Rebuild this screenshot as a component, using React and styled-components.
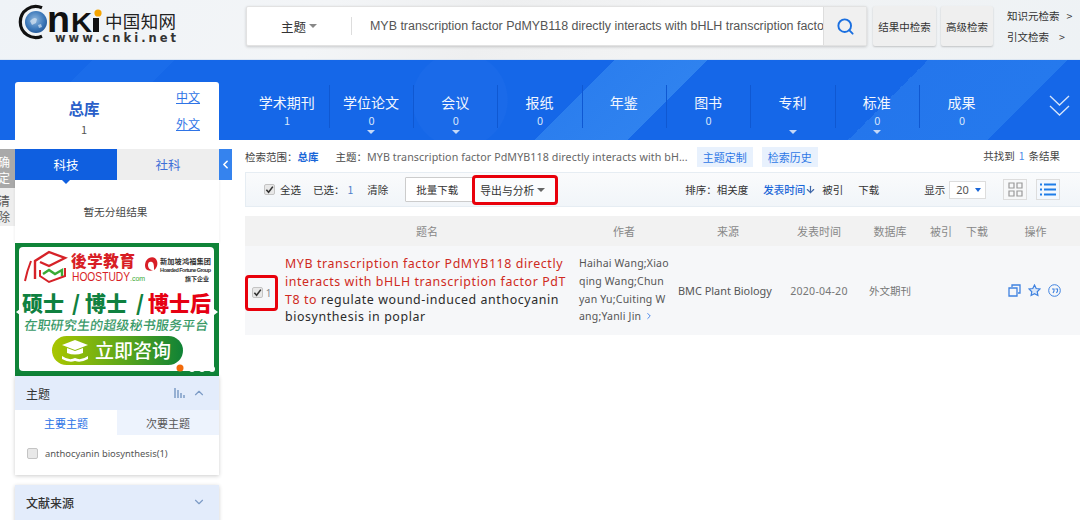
import React from 'react';
import styled, { createGlobalStyle } from 'styled-components';
import { Search, ChevronUp, ChevronDown, ChevronLeft, ChevronRight, ArrowDown } from 'lucide-react';

const CJK = `"Noto Sans CJK SC", "Noto Sans", sans-serif`;
const LATIN = `"Noto Sans", "Noto Sans CJK SC", sans-serif`;

const Global = createGlobalStyle`
  html, body { margin: 0; padding: 0; background: #fff; }
  body { width: 1080px; height: 520px; overflow: hidden; font-family: ${CJK}; color: #333; }
  * { box-sizing: border-box; }
`;

const Page = styled.div`width: 1080px; height: 520px; overflow: hidden; display: flex; flex-direction: column;`;

const Header = styled.header`
  height: 60px; flex: none; display: flex; align-items: flex-start;
  padding: 6px 0 0 18px;
  background: linear-gradient(120deg, #eff3f7 0%, #f3f5f7 30%, #eeeff0 45%, #f2f3f4 60%, #eef2f5 100%);
  border-bottom: 1px solid #dce6f2;
`;
const LogoSvg = styled.svg`width: 170px; height: 44px; margin-top: -6px; flex: none; overflow: visible;`;
const SearchBox = styled.div`
  width: 621px; height: 40px; margin-left: 58px; flex: none; display: flex; align-items: center;
  background: #fff; border: 1px solid #e2e2e2; border-radius: 2px; box-shadow: 0 1px 3px rgba(0,0,0,.18);
`;
const ScopeSelect = styled.div`
  width: 105px; height: 18px; display: flex; align-items: center; gap: 3px;
  padding-left: 34px; font-size: 12.5px; color: #333; border-right: 1px solid #ddd; flex: none;
`;
const Caret = styled.i`
  display: inline-block; width: 0; height: 0; flex: none;
  border-left: ${p => p.$w || 4}px solid transparent; border-right: ${p => p.$w || 4}px solid transparent;
  border-top: ${p => p.$h || 4}px solid ${p => p.$c || '#888'};
`;
const Query = styled.div`
  flex: 1; min-width: 0; padding-left: 18px; overflow: hidden; white-space: nowrap;
  font: 12.45px "Liberation Sans", sans-serif; color: #555;
`;
const SearchBtn = styled.div`
  width: 43px; height: 38px; flex: none; display: flex; align-items: center; justify-content: center;
  background: #f0f0f0; border-left: 1px solid #ddd; color: #1a6fe0;
`;
const GreyBtn = styled.div`
  height: 40px; width: ${p => p.$w}px; margin-left: ${p => p.$ml}px; flex: none; display: flex; align-items: center; justify-content: center;
  background: #efefef; border-radius: 2px; box-shadow: 0 1px 2px rgba(0,0,0,.2); font-size: 10.5px; color: #333; white-space: nowrap;
`;
const SideLinks = styled.div`
  margin-left: 14px; padding-top: 2px; display: flex; flex-direction: column; gap: 5px; font-size: 10.5px; color: #333; line-height: 16px;
`;
const SideLink = styled.div`display: flex; gap: ${p => p.$gap}px;`;

const Band = styled.section`
  height: 80px; flex: none; display: flex; align-items: flex-end; padding-left: 15px; position: relative;
  background:
    radial-gradient(circle at 460px 40px, #1a6ae9 0, #1a6ae9 47px, transparent 48px),
    linear-gradient(135deg, #1567e8 0, #1567e8 8%, #1a6cea 8%, #1a6cea 15%, #1567e8 15%, #1567e8 53%, #2b7eee 53%, #2f82ef 61%, #1567e8 61%, #1567e8 80%, #2476ec 80%, #2579ed 92%, #1567e8 92%);
`;
const LibCard = styled.div`
  width: 204px; height: 58px; flex: none; background: #fff; border-radius: 3px 3px 0 0;
  display: flex;
`;
const LibMain = styled.div`
  width: 138px; flex: none; display: flex; flex-direction: column; align-items: center; padding-top: 16px;
`;
const LibName = styled.div`font-size: 15.5px; line-height: 20px; font-weight: 700; color: #2a5fc9;`;
const LibCount = styled.div`font-size: 11px; color: #555; line-height: 23px;`;
const LibLangs = styled.div`flex: 1; display: flex; flex-direction: column; gap: 9px; padding-top: 6px; padding-left: 23px;`;
const LangLink = styled.a`font-size: 12px; line-height: 18px; color: #2f74e6; text-decoration: underline;`;
const Nav = styled.nav`margin-left: 26.5px; display: flex; height: 43px; align-self: flex-start; margin-top: 25px;`;
const NavItem = styled.div`
  width: 84.3px; height: 43px; padding-top: 5px; position: relative; display: flex; flex-direction: column; align-items: center; color: #fff;
  border-right: ${p => p.$last ? 'none' : '1px solid #0f58d2'};
`;
const NavName = styled.div`font-size: 14px; line-height: 24px; color: #f3f7fe; margin-left: -1px;`;
const NavCount = styled.div`font-size: 11px; line-height: 13px; color: #d6e5fb;`;
const NavCaret = styled(Caret)`position: absolute; bottom: -6px; left: 50%; margin-left: -4px;`;
const Expand = styled.svg`position: absolute; right: 10px; top: 35px; width: 21px; height: 22px;`;

const Body = styled.main`flex: 1; min-height: 0; display: flex; align-items: flex-start; padding-top: 9px;`;
const Stub = styled.div`width: 15px; flex: none; display: flex; flex-direction: column;`;
const StubBtn = styled.div`
  height: ${p => p.$h}px; overflow: hidden; background: ${p => p.$bg}; color: ${p => p.$c};
  font-size: 12px; line-height: 16px; padding-top: 5px;
`;
const StubInner = styled.div`margin-left: -2px; width: 12px;`;
const Aside = styled.aside`width: 204px; flex: none; display: flex; flex-direction: column;`;
const TopTabs = styled.div`display: flex; height: 31px;`;
const TopTab = styled.div`
  width: 102px; display: flex; align-items: center; justify-content: center; position: relative; font-size: 12.5px;
  background: ${p => p.$on ? '#0f5fe0' : '#eee'}; color: ${p => p.$on ? '#fff' : '#3f6fd8'};
  ${p => p.$on && `&::after { content: ''; position: absolute; left: 46px; bottom: -4px; border: 5px solid transparent; border-bottom: 0; border-top-color: #0f5fe0; }`}
`;
const Empty = styled.div`
  height: 63px; display: flex; align-items: center; justify-content: center; padding-right: 3px; font-size: 10.7px; color: #444;
  background: #fff; box-shadow: 1px 0 2px rgba(0,0,0,.05), -1px 0 2px rgba(0,0,0,.05);
`;
const AdSvg = styled.svg`display: block; width: 204px; height: 133px; flex: none;`;
const FacetCard = styled.div`
  background: #fff; box-shadow: 0 1px 4px rgba(0,0,0,.2); display: flex; flex-direction: column; margin-bottom: ${p => p.$mb || 0}px;
`;
const FacetHead = styled.div`
  height: ${p => p.$h}px; padding: 0 13px 0 11px; padding-bottom: ${p => p.$pb || 0}px; display: flex; align-items: center; background: #e3ecfb; font-size: 12px; color: #333; font-weight: ${p => p.$bold ? 500 : 400};
`;
const FacetTitle = styled.div`flex: 1;`;
const Bars = styled.svg`width: 11px; height: 10px; margin-right: 7px; flex: none;`;
const FacetTabs = styled.div`display: flex; height: 25px;`;
const FacetTab = styled.div`
  width: 102px; display: flex; align-items: center; justify-content: center; font-size: 11px;
  background: ${p => p.$on ? '#fff' : '#edf3fd'}; color: ${p => p.$on ? '#2a72e6' : '#555'};
`;
const FacetRow = styled.div`height: 40px; padding: 0 0 3px 12px; display: flex; align-items: center; gap: 7px; font: 9.4px ${LATIN}; color: #555; background: #fff;`;
const Box = styled.span`
  width: ${p => p.$s || 11}px; height: ${p => p.$s || 11}px; flex: none; display: inline-flex; align-items: center; justify-content: center;
  background: #e8e8e8; border: 1px solid #c4c4c4; border-radius: 2px;
`;
const Toggle = styled.div`
  width: 13px; height: 31px; flex: none; background: #3583ee; color: #fff; display: flex; align-items: center; justify-content: center;
`;
const Content = styled.div`flex: 1; min-width: 0; padding-left: 13px; display: flex; flex-direction: column;`;
const Crumbs = styled.div`height: 27px; display: flex; align-items: center; font-size: 10.5px; color: #444; margin-top: -6px;`;
const Blue = styled.span`color: ${p => p.$c || '#1a66d8'}; font-weight: ${p => p.$b ? 700 : 400};`;
const Topic = styled.span`margin-left: 17px; color: #444;`;
const TopicQ = styled.span`font: 10.7px ${LATIN}; letter-spacing: .09px; color: #666; white-space: nowrap;`;
const Chip = styled.span`
  height: 20px; padding: 0 6px; margin-left: ${p => p.$ml}px; background: #e8f1fd; color: #2e78e6; display: inline-flex; align-items: center; font-size: 11px;
`;
const Found = styled.span`margin-left: auto; padding-right: 20px; font-size: 10.5px; color: #444; margin-top: -2px; display: inline-flex; gap: 4px;`;
const Toolbar = styled.div`
  height: 35px; margin-top: 2px; display: flex; align-items: center; padding-left: 18px;
  background: linear-gradient(#fafbfc, #f1f5f9); border: 1px solid #e6edf3; border-right: 0; font-size: 10.5px; color: #333;
`;
const ToolText = styled.span`margin-left: ${p => p.$ml || 0}px; color: ${p => p.$c || '#333'}; font-weight: ${p => p.$b ? 500 : 400}; display: inline-flex; align-items: center; white-space: nowrap;`;
const BatchBtn = styled.div`
  width: 68px; height: 25px; margin-left: 17px; padding-right: 4px; flex: none; background: #fff; border: 1px solid #ccc; display: flex; align-items: center; justify-content: center; font-size: 10.5px; border-radius: 1px;
`;
const ExportBtn = styled.div`
  width: 86px; height: 30px; margin-left: -1px; padding-left: 5px; flex: none; display: flex; align-items: center; gap: 3px; font-size: 10.8px;
  border: 3px solid #e8000b; border-radius: 4px; background: #fbfcfd; position: relative;
`;
const PageSize = styled.div`
  width: 37px; height: 18px; margin-left: 4px; background: #fff; border: 1px solid #ddd; display: flex; align-items: center; justify-content: space-between; padding: 0 4px 0 6px; font: 11px ${LATIN}; color: #555;
`;
const ViewBtn = styled.div`
  width: 24px; height: 21px; margin-left: ${p => p.$ml}px; flex: none; border: 1px solid #ddd; display: flex; align-items: center; justify-content: center; background: ${p => p.$on ? '#f4f8fd' : '#f7f8f9'};
`;
const GRID = '40px 284px 110px 98px 84px 58px 44px 28px 89px';
const TableHead = styled.div`
  margin-top: 9px; height: 30px; display: grid; grid-template-columns: ${GRID}; align-items: center; background: #f2f2f2; font-size: 11px; color: #888; text-align: center;
`;
const Row = styled.div`
  height: 89px; display: grid; grid-template-columns: ${GRID}; align-items: center; background: #f6f7f9; font: 10.5px ${LATIN}; color: #555;
`;
const CheckCell = styled.div`
  height: 36px; width: 33px; margin-top: 4px; display: flex; align-items: center; justify-content: center; gap: 3px; color: #888; font-size: 10px;
  border: 3px solid #e8000b; border-radius: 4px;
`;
const Title = styled.div`
  font: 12.4px/17.9px ${LATIN}; letter-spacing: .59px; color: #2b2b2b; word-break: break-all; padding-right: 2px;
`;
const Red = styled.span`color: #cf2a22;`;
const Authors = styled.div`
  padding-left: 10px; font: 10.5px/17.9px ${LATIN}; letter-spacing: .2px; color: #555; white-space: nowrap;
`;
const Source = styled.div`white-space: nowrap; font-size: 10.9px; color: #555; margin-left: -1px;`;
const DateCell = styled.div`text-align: center; font-size: 10.6px; color: #777; letter-spacing: .2px;`;
const Db = styled.div`text-align: center; font: 10.5px ${CJK}; color: #777;`;
const Ops = styled.div`display: flex; gap: 7px; padding-left: 17px; align-items: center;`;
const OpIcon = styled.svg`width: 13px; height: 13px; flex: none;`;

const Check = ({ s = 9 }) => (
  <svg width={s} height={s} viewBox="0 0 10 10"><path d="M1.5 5.2 4 8 8.7 1.8" fill="none" stroke="#333" strokeWidth="1.8" /></svg>
);

const Logo = () => (
  <LogoSvg viewBox="0 0 170 44">
    <defs>
      <radialGradient id="g" cx=".45" cy=".4" r=".7">
        <stop offset="0" stopColor="#8fb7de" /><stop offset=".6" stopColor="#3c78b9" /><stop offset="1" stopColor="#1d4f8e" />
      </radialGradient>
    </defs>
    <path d="M24 7.800A15.500 15.500 0 1 0 24 36.200" fill="none" stroke="#111" strokeWidth="3.200" />
    <circle cx="18" cy="22" r="11" fill="url(#g)" />
    <path d="M12 21q4-5 7-2l-1 4-4 2zM20 25l3-1 1 3-3 1z" fill="#d8e6f2" opacity=".7" />
    <text x="29" y="32" fontFamily="Liberation Sans" fontWeight="700" fontSize="37" textLength="23" lengthAdjust="spacingAndGlyphs" fill="#111">n</text>
    <text x="53" y="32" fontFamily="Liberation Sans" fontWeight="700" fontSize="28" textLength="21" lengthAdjust="spacingAndGlyphs" fill="#111">K</text>
    <rect x="75" y="18" width="6" height="14" fill="#111" />
    <circle cx="80" cy="13" r="3.600" fill="#f5a400" />
    <text x="87" y="28" fontFamily="Noto Sans CJK SC" fontSize="17.500" fontWeight="400" fill="#222" textLength="71">中国知网</text>
    <text x="37" y="42" fontFamily="DejaVu Sans" fontWeight="700" fontSize="11.500" fill="#333" textLength="121">www.cnki.net</text>
  </LogoSvg>
);

const Ad = () => (
  <AdSvg viewBox="0 0 204 133">
    <defs>
      <linearGradient id="btn" x1="0" x2="1"><stop offset="0" stopColor="#a9c600" /><stop offset=".55" stopColor="#5ca61a" /><stop offset="1" stopColor="#0f8236" /></linearGradient>
    </defs>
    <rect width="204" height="133" fill="#0f8438" />
    <rect x="4" y="4" width="195" height="124" rx="4" fill="#fff" />
    <path d="M1 69l4-3v6zM203 69l-4-3v6z" fill="#fff" />
    <path d="M16 18q-4 10-6 20" fill="none" stroke="#d62228" strokeWidth="2" />
    <path d="M20 36V18l14-9 16 6-16 8-9-4" fill="none" stroke="#d62228" strokeWidth="2.400" />
    <path d="M25 27v6l9 6 16-6v-8" fill="none" stroke="#d62228" strokeWidth="2" />
    <path d="M28 31l6-4 6 4 7-4v6" fill="none" stroke="#3aaa35" strokeWidth="2.400" />
    <text x="56" y="24" fontFamily="Noto Sans CJK SC" fontSize="15.500" fontWeight="900" fill="#d81e26" textLength="64">後学教育</text>
    <text x="57" y="38" fontFamily="Liberation Sans" fontSize="13.500" fill="#d81e26" textLength="58" lengthAdjust="spacingAndGlyphs">HOOSTUDY</text>
    <text x="115" y="38" fontFamily="Liberation Sans" fontSize="7" fill="#3aaa35">.com</text>
    <path d="M134 15c-4 2-5 8-3 11 2 2 5 2 7 1-3 0-5-2-5-5 0-3 2-4 4-3 2 1 2 4 2 8 3-2 4-6 3-9-1-3-4-5-8-3z" fill="#d81e26" />
    <text x="145" y="21" fontFamily="Noto Sans CJK SC" fontSize="7.200" fontWeight="700" fill="#333" textLength="51">新加坡鸿福集团</text>
    <text x="145" y="29" fontFamily="Liberation Sans" fontSize="5.500" fontWeight="700" fill="#333" textLength="51">Hoarded Fortune Group</text>
    <text x="170" y="38" fontFamily="Noto Sans CJK SC" fontSize="6" fontWeight="700" fill="#333" textLength="24">旗下企业</text>
    <g fontFamily="Noto Sans CJK SC" fontSize="21" fontWeight="900" fill="#0f8140">
      <text x="7" y="68">硕士</text>
      <text x="57" y="68">/</text>
      <text x="70" y="68">博士</text>
      <text x="121" y="68">/</text>
      <text x="133" y="68" fill="#e60012">博士后</text>
    </g>
    <text x="9" y="87" fontFamily="Noto Sans CJK SC" fontSize="13" fontWeight="500" fill="#3a9a68" textLength="184" transform="skewX(-8) translate(12 0)">在职研究生的超级秘书服务平台</text>
    <rect x="37" y="93" width="131" height="29" rx="14.500" fill="url(#btn)" />
    <path d="M60 97l13 5-13 5-13-5z" fill="#fff" />
    <path d="M52 105v5q8 3 16 0v-5l-8 3zM47 113q7 5 13 2 6 3 13-2v3q-7 4-13 2-6 2-13-2z" fill="#fff" />
    <text x="80" y="114.500" fontFamily="Noto Sans CJK SC" fontSize="19" fontWeight="500" fill="#fff" textLength="76">立即咨询</text>
    <circle cx="165" cy="125" r="3.500" fill="#f26a0a" />
    <circle cx="177" cy="126" r="3" fill="#fff" /><circle cx="187" cy="126" r="3" fill="#fff" /><circle cx="197" cy="126" r="3" fill="#fff" />
  </AdSvg>
);

const navItems = [
  ['学术期刊', '1', false], ['学位论文', '0', true], ['会议', '0', true], ['报纸', '0', false], ['年鉴', '', false],
  ['图书', '0', false], ['专利', '', true], ['标准', '0', true], ['成果', '0', false],
];

export default function App() {
  return (
    <Page>
      <Global />
      <Header>
        <Logo />
        <SearchBox>
          <ScopeSelect>主题 <Caret /></ScopeSelect>
          <Query>MYB transcription factor PdMYB118 directly interacts with bHLH transcription factor PdTT8 to regulate wound-induced anthocyanin biosynthesis in poplar</Query>
          <SearchBtn><Search size={19} strokeWidth={2.4} /></SearchBtn>
        </SearchBox>
        <GreyBtn $w={63} $ml={6}>结果中检索</GreyBtn>
        <GreyBtn $w={52} $ml={5}>高级检索</GreyBtn>
        <SideLinks>
          <SideLink $gap={7}><span>知识元检索</span><span>&gt;</span></SideLink>
          <SideLink $gap={10}><span>引文检索</span><span>&gt;</span></SideLink>
        </SideLinks>
      </Header>
      <Band>
        <LibCard>
          <LibMain><LibName>总库</LibName><LibCount>1</LibCount></LibMain>
          <LibLangs><LangLink>中文</LangLink><LangLink>外文</LangLink></LibLangs>
        </LibCard>
        <Nav>
          {navItems.map(([n, c, caret], i) => (
            <NavItem key={n} $last={i === navItems.length - 1}>
              <NavName>{n}</NavName>
              <NavCount>{c}</NavCount>
              {caret && <NavCaret $c="#c5d9f7" />}
            </NavItem>
          ))}
        </Nav>
        <Expand viewBox="0 0 21 22"><path d="M1 1l9.500 9L20 1M1 11l9.500 9 9.500-9" fill="none" stroke="#d6e5fb" strokeWidth="1.300" /></Expand>
      </Band>
      <Body>
        <Stub>
          <StubBtn $h={39} $bg="#a9a9a9" $c="#fff"><StubInner>确定</StubInner></StubBtn>
          <StubBtn $h={38} $bg="#eee" $c="#555"><StubInner>清除</StubInner></StubBtn>
        </Stub>
        <Aside>
          <TopTabs><TopTab $on>科技</TopTab><TopTab>社科</TopTab></TopTabs>
          <Empty>暂无分组结果</Empty>
          <Ad />
          <FacetCard $mb={10}>
            <FacetHead $h={34}>
              <FacetTitle>主题</FacetTitle>
              <Bars viewBox="0 0 11 10"><path d="M1 0v10M4 2v8M7 5v5M10 7v3" stroke="#7d9cc6" strokeWidth="1.500" /></Bars>
              <ChevronUp size={14} strokeWidth={2} color="#7d9cc6" />
            </FacetHead>
            <FacetTabs><FacetTab $on>主要主题</FacetTab><FacetTab>次要主题</FacetTab></FacetTabs>
            <FacetRow><Box />anthocyanin biosynthesis(1)</FacetRow>
          </FacetCard>
          <FacetCard>
            <FacetHead $h={40} $pb={6} $bold>
              <FacetTitle>文献来源</FacetTitle>
              <ChevronDown size={14} strokeWidth={2} color="#7d9cc6" />
            </FacetHead>
          </FacetCard>
        </Aside>
        <Toggle><ChevronLeft size={13} strokeWidth={3} /></Toggle>
        <Content>
          <Crumbs>
            <span>检索范围：</span><Blue $b>总库</Blue>
            <Topic>主题：</Topic>
            <TopicQ>MYB transcription factor PdMYB118 directly interacts with bH...</TopicQ>
            <Chip $ml={9}>主题定制</Chip>
            <Chip $ml={9}>检索历史</Chip>
            <Found><span>共找到</span><Blue $c="#4d8ae6">1</Blue><span>条结果</span></Found>
          </Crumbs>
          <Toolbar>
            <Box $s={11}><Check /></Box>
            <ToolText $ml={5}>全选</ToolText>
            <ToolText $ml={12}>已选：</ToolText>
            <ToolText $ml={3} $c="#4d7fc9">1</ToolText>
            <ToolText $ml={14}>清除</ToolText>
            <BatchBtn>批量下载</BatchBtn>
            <ExportBtn>导出与分析 <Caret $c="#666" /></ExportBtn>
            <ToolText $ml={127}>排序：相关度</ToolText>
            <ToolText $ml={15} $c="#1a66d8" $b>发表时间<ArrowDown size={11} strokeWidth={2.5} color="#3f67a8" /></ToolText>
            <ToolText $ml={6}>被引</ToolText>
            <ToolText $ml={15}>下载</ToolText>
            <ToolText $ml={45}>显示</ToolText>
            <PageSize>20<Caret $c="#1a66d8" $w={3} $h={4} /></PageSize>
            <ViewBtn $ml={17}>
              <svg width="15" height="15" viewBox="0 0 15 15"><path d="M1 1h5v5H1zM9 1h5v5H9zM1 9h5v5H1zM9 9h5v5H9z" fill="none" stroke="#999" strokeWidth="1.200" /></svg>
            </ViewBtn>
            <ViewBtn $ml={9} $on>
              <svg width="16" height="13" viewBox="0 0 16 13"><path d="M0 1.500h2M4 1.500h12M0 6.500h2M4 6.500h12M0 11.500h2M4 11.500h12" stroke="#1f7de8" strokeWidth="2" /></svg>
            </ViewBtn>
          </Toolbar>
          <TableHead>
            <span />
            <span>题名</span><span>作者</span><span>来源</span><span>发表时间</span><span>数据库</span><span>被引</span><span>下载</span><span>操作</span>
          </TableHead>
          <Row>
            <CheckCell><Box $s={11}><Check /></Box>1</CheckCell>
            <Title><Red>MYB transcription factor PdMYB118 directly interacts with bHLH transcription factor PdTT8 to</Red> regulate wound-induced anthocyanin biosynthesis in poplar</Title>
            <Authors>Haihai Wang;Xiao<br />qing Wang;Chun<br />yan Yu;Cuiting W<br />ang;Yanli Jin <ChevronRight size={10} color="#2a72e6" style={{ verticalAlign: -1 }} /></Authors>
            <Source>BMC Plant Biology</Source>
            <DateCell>2020-04-20</DateCell>
            <Db>外文期刊</Db>
            <span /><span />
            <Ops>
              <OpIcon viewBox="0 0 13 13"><path d="M4 3V1h8v8h-2M1 4h8v8H1z" fill="none" stroke="#3f82e0" strokeWidth="1.300" /></OpIcon>
              <OpIcon viewBox="0 0 13 13"><path d="M6.500 1l1.700 3.500 3.800.5-2.800 2.700.7 3.800-3.400-1.800-3.400 1.800.7-3.800L1 5l3.800-.5z" fill="#dbe7f8" stroke="#3f82e0" strokeWidth="1.200" /></OpIcon>
              <OpIcon viewBox="0 0 13 13"><circle cx="6.500" cy="6.500" r="5.800" fill="none" stroke="#3f82e0" strokeWidth="1" /><path d="M4 5h2v2L5 9M7.500 5h2v2l-1 2" fill="none" stroke="#3f82e0" strokeWidth="1.100" /></OpIcon>
            </Ops>
          </Row>
        </Content>
      </Body>
    </Page>
  );
}
